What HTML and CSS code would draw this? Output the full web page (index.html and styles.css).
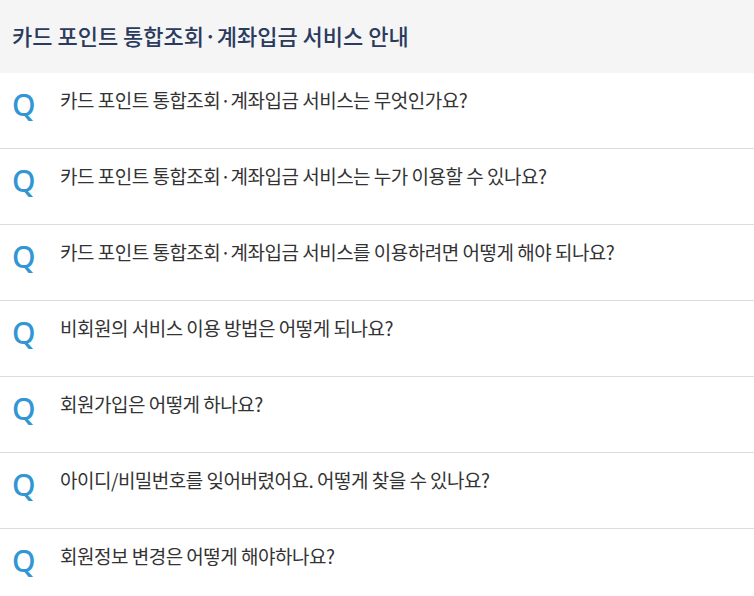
FILE: index.html
```html
<html>
  <head>
    <link rel="stylesheet" href="styles.css">
  </head>
  <body>
    <div class="title">
      <h1>카드 포인트 통합조회·계좌입금 서비스 안내</h1>
    </div>
    <ul class="faq">
      <li><span class="q">Q</span><span class="text">카드 포인트 통합조회·계좌입금 서비스는 무엇인가요?</span></li>
      <li><span class="q">Q</span><span class="text">카드 포인트 통합조회·계좌입금 서비스는 누가 이용할 수 있나요?</span></li>
      <li><span class="q">Q</span><span class="text">카드 포인트 통합조회·계좌입금 서비스를 이용하려면 어떻게 해야 되나요?</span></li>
      <li><span class="q">Q</span><span class="text">비회원의 서비스 이용 방법은 어떻게 되나요?</span></li>
      <li><span class="q">Q</span><span class="text">회원가입은 어떻게 하나요?</span></li>
      <li><span class="q">Q</span><span class="text">아이디/비밀번호를 잊어버렸어요. 어떻게 찾을 수 있나요?</span></li>
      <li><span class="q">Q</span><span class="text">회원정보 변경은 어떻게 해야하나요?</span></li>
    </ul>
  </body>
</html>
```

FILE: styles.css
```css
body {
  font-family: "Noto Sans CJK KR", "Noto Sans", sans-serif;
  margin: 0;
  padding: 0;
  background: #fff;
}
.title {
  background: #f5f5f5;
  height: 73px;
  box-sizing: border-box;
  display: flex;
  align-items: center;
  padding: 0 12px 4px 12px;
}
.title h1 {
  margin: 0;
  font-size: 22px;
  font-weight: 500;
  color: #2a3b5e;
  letter-spacing: 0;
}
ul.faq {
  margin: 0;
  padding: 0;
  list-style: none;
}
ul.faq li {
  height: 76px;
  box-sizing: border-box;
  border-bottom: 1px solid #dcdcdc;
  display: flex;
  align-items: flex-start;
  padding: 14px 12px 0 12px;
}
.q {
  width: 48px;
  margin-top: 3px;
  font-family: "Noto Sans", sans-serif;
  font-size: 30px;
  font-weight: 500;
  line-height: 30px;
  color: #3196d3;
}
.text {
  font-size: 19px;
  line-height: 26px;
  color: #333;
  letter-spacing: -0.5px;
}
```
